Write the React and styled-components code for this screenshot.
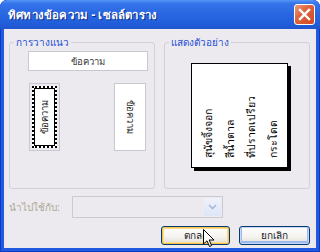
import React from 'react';
import styled, { createGlobalStyle } from 'styled-components';

const Global = createGlobalStyle`
  html, body { margin: 0; padding: 0; background: #ffffff; }
  body {
    width: 320px; height: 252px; overflow: hidden;
    font-family: Tahoma, "Noto Sans", "DejaVu Sans", sans-serif;
  }
`;

const BG = '#ECEAEE';

const Window = styled.div`
  position: relative;
  width: 320px;
  height: 252px;
  box-sizing: border-box;
  display: flex;
  flex-direction: column;
  background: #1F5AE0;
  box-shadow: inset 0 0 0 1px #0B3CC5;
  border-radius: 7px 7px 0 0;
  overflow: hidden;
`;

const TitleBar = styled.div`
  height: 29px;
  flex: none;
  display: flex;
  align-items: center;
  justify-content: space-between;
  padding: 0 5px 0 8px;
  box-sizing: border-box;
  border-radius: 7px 7px 0 0;
  background: linear-gradient(180deg, #5796F7 0%, #3574EA 12%, #2A67E2 45%, #2360DC 75%, #1E55CF 100%);
`;

const Title = styled.span`
  color: #ffffff;
  font-weight: bold;
  font-size: 11.5px;
  letter-spacing: 0.2px;
  text-shadow: 1px 1px 0 #0B2A8A;
  white-space: nowrap;
`;

const CloseButton = styled.div`
  width: 21px;
  height: 21px;
  box-sizing: border-box;
  border: 1px solid #ffffff;
  border-radius: 3px;
  background: linear-gradient(135deg, #ED9A7C 0%, #E0643E 40%, #CB4A22 100%);
  display: flex;
  align-items: center;
  justify-content: center;
`;

const Body = styled.div`
  flex: 1;
  margin: 0 4px 4px;
  background: ${BG};
  display: flex;
  flex-direction: column;
  padding: 13px 6px 3px 5px;
  box-sizing: border-box;
  font-size: 10px;
`;

const GroupsRow = styled.div`
  display: flex;
  gap: 9px;
`;

const Group = styled.div`
  position: relative;
  width: 146px;
  height: 147px;
  box-sizing: border-box;
  border: 1px solid #D2D0D8;
  border-radius: 3px;
  display: flex;
  flex-direction: column;
  padding: ${p => p.$pad};
  align-items: ${p => p.$align || 'stretch'};
`;

const Legend = styled.span`
  position: absolute;
  top: -8px;
  left: 4px;
  padding: 0 2px;
  background: ${BG};
  color: #1D4FD6;
  font-size: 10px;
  line-height: 14px;
`;

const TopBox = styled.div`
  width: 120px;
  height: 20px;
  box-sizing: border-box;
  border: 1px solid #C9C7CF;
  background: #ffffff;
  display: flex;
  align-items: center;
  justify-content: center;
  font-size: 9.5px;
  color: #3A3A3A;
`;

const VerticalRow = styled.div`
  display: flex;
  gap: 54px;
  margin-top: 12px;
  padding-left: 1px;
`;

const VBox = styled.div`
  width: ${p => (p.$selected ? 31 : 32)}px;
  height: 68px;
  box-sizing: border-box;
  border: 1px solid #C9C7CF;
  background: ${p => (p.$selected ? BG : '#ffffff')};
  padding: ${p => (p.$selected ? '2px' : '0')};
  display: flex;
`;

const VInner = styled.div`
  flex: 1;
  background: #ffffff;
  border: ${p => (p.$selected ? '2px dotted #000' : 'none')};
  box-shadow: ${p => (p.$selected ? 'inset 0 0 0 1px #000' : 'none')};
  display: flex;
  align-items: center;
  justify-content: center;
`;

const VText = styled.span`
  writing-mode: vertical-rl;
  transform: ${p => (p.$up ? 'rotate(180deg)' : 'none')};
  font-size: 9.5px;
  color: #222;
  white-space: nowrap;
`;

const Page = styled.div`
  width: 97px;
  height: 105px;
  box-sizing: border-box;
  border: 1px solid #000;
  background: #ffffff;
  box-shadow: 3px 3px 0 #000;
  padding: 0 0 9px 6px;
  display: flex;
  align-items: flex-end;
`;

const PreviewText = styled.div`
  writing-mode: vertical-rl;
  transform: rotate(180deg);
  height: 86px;
  font-size: 10.5px;
  line-height: 21.7px;
  color: #000;
  white-space: nowrap;
`;

const ApplyRow = styled.div`
  display: flex;
  align-items: center;
  margin-top: 7px;
`;

const ApplyLabel = styled.span`
  width: 63px;
  font-size: 10px;
  color: #ACA899;
  white-space: nowrap;
`;

const Combo = styled.div`
  width: 151px;
  height: 22px;
  box-sizing: border-box;
  border: 1px solid #CBC9D1;
  background: ${BG};
  display: flex;
  justify-content: flex-end;
  padding: 1px;
`;

const ComboButton = styled.div`
  width: 17px;
  background: linear-gradient(180deg, #EEF2FA 0%, #DDE6F6 100%);
  display: flex;
  align-items: center;
  justify-content: center;
`;

const ButtonsRow = styled.div`
  display: flex;
  justify-content: flex-end;
  gap: 9px;
  margin-top: 8px;
`;

const Button = styled.div`
  width: ${p => p.$w}px;
  height: 19px;
  box-sizing: border-box;
  border: 1px solid #003C74;
  border-radius: 3px;
  background: linear-gradient(180deg, #FFFFFF 0%, #F4F3EE 60%, #E6E2DA 90%, #D6D0C5 100%);
  box-shadow: ${p => (p.$hot
    ? 'inset 0 0 0 1px #F9C24D, inset 0 0 0 2px #FCDC8F'
    : 'inset 0 0 0 1px #C8D9F7, inset 0 -1px 0 2px #9DB8EA')};
  display: flex;
  align-items: center;
  justify-content: center;
  font-size: 10px;
  color: #1A1A2A;
`;

const Cursor = styled.svg`
  position: absolute;
  left: 203px;
  top: 229px;
`;

export default function App() {
  return (
    <>
      <Global />
      <Window>
        <TitleBar>
          <Title>ทิศทางข้อความ - เซลล์ตาราง</Title>
          <CloseButton>
            <svg width="13" height="13" viewBox="0 0 13 13">
              <path d="M2 2 L11 11 M11 2 L2 11" stroke="#fff" strokeWidth="2.4" strokeLinecap="square" />
            </svg>
          </CloseButton>
        </TitleBar>
        <Body>
          <GroupsRow>
            <Group $pad="8px 6px 0 18px">
              <Legend>การวางแนว</Legend>
              <TopBox>ข้อความ</TopBox>
              <VerticalRow>
                <VBox $selected>
                  <VInner $selected>
                    <VText $up>ข้อความ</VText>
                  </VInner>
                </VBox>
                <VBox>
                  <VInner>
                    <VText>ข้อความ</VText>
                  </VInner>
                </VBox>
              </VerticalRow>
            </Group>
            <Group $pad="20px 0 0 26px" $align="flex-start">
              <Legend>แสดงตัวอย่าง</Legend>
              <Page>
                <PreviewText>
                  <div>สุนัขจิ้งจอก</div>
                  <div>สีน้ำตาล</div>
                  <div>ที่ปราดเปรียว</div>
                  <div>กระโดด</div>
                </PreviewText>
              </Page>
            </Group>
          </GroupsRow>
          <ApplyRow>
            <ApplyLabel>นำไปใช้กับ:</ApplyLabel>
            <Combo>
              <ComboButton>
                <svg width="9" height="6" viewBox="0 0 9 6">
                  <path d="M1 1 L4.5 4.5 L8 1" stroke="#A9B8D8" strokeWidth="1.6" fill="none" />
                </svg>
              </ComboButton>
            </Combo>
          </ApplyRow>
          <ButtonsRow>
            <Button $w={69} $hot>ตกลง</Button>
            <Button $w={71}>ยกเลิก</Button>
          </ButtonsRow>
        </Body>
        <Cursor width="12" height="19" viewBox="0 0 12 19">
          <path d="M0.5 0.5 L0.5 15 L4 11.8 L6.5 17.5 L8.6 16.6 L6.2 11 L11 11 Z" fill="#fff" stroke="#000" strokeWidth="1" />
        </Cursor>
      </Window>
    </>
  );
}
